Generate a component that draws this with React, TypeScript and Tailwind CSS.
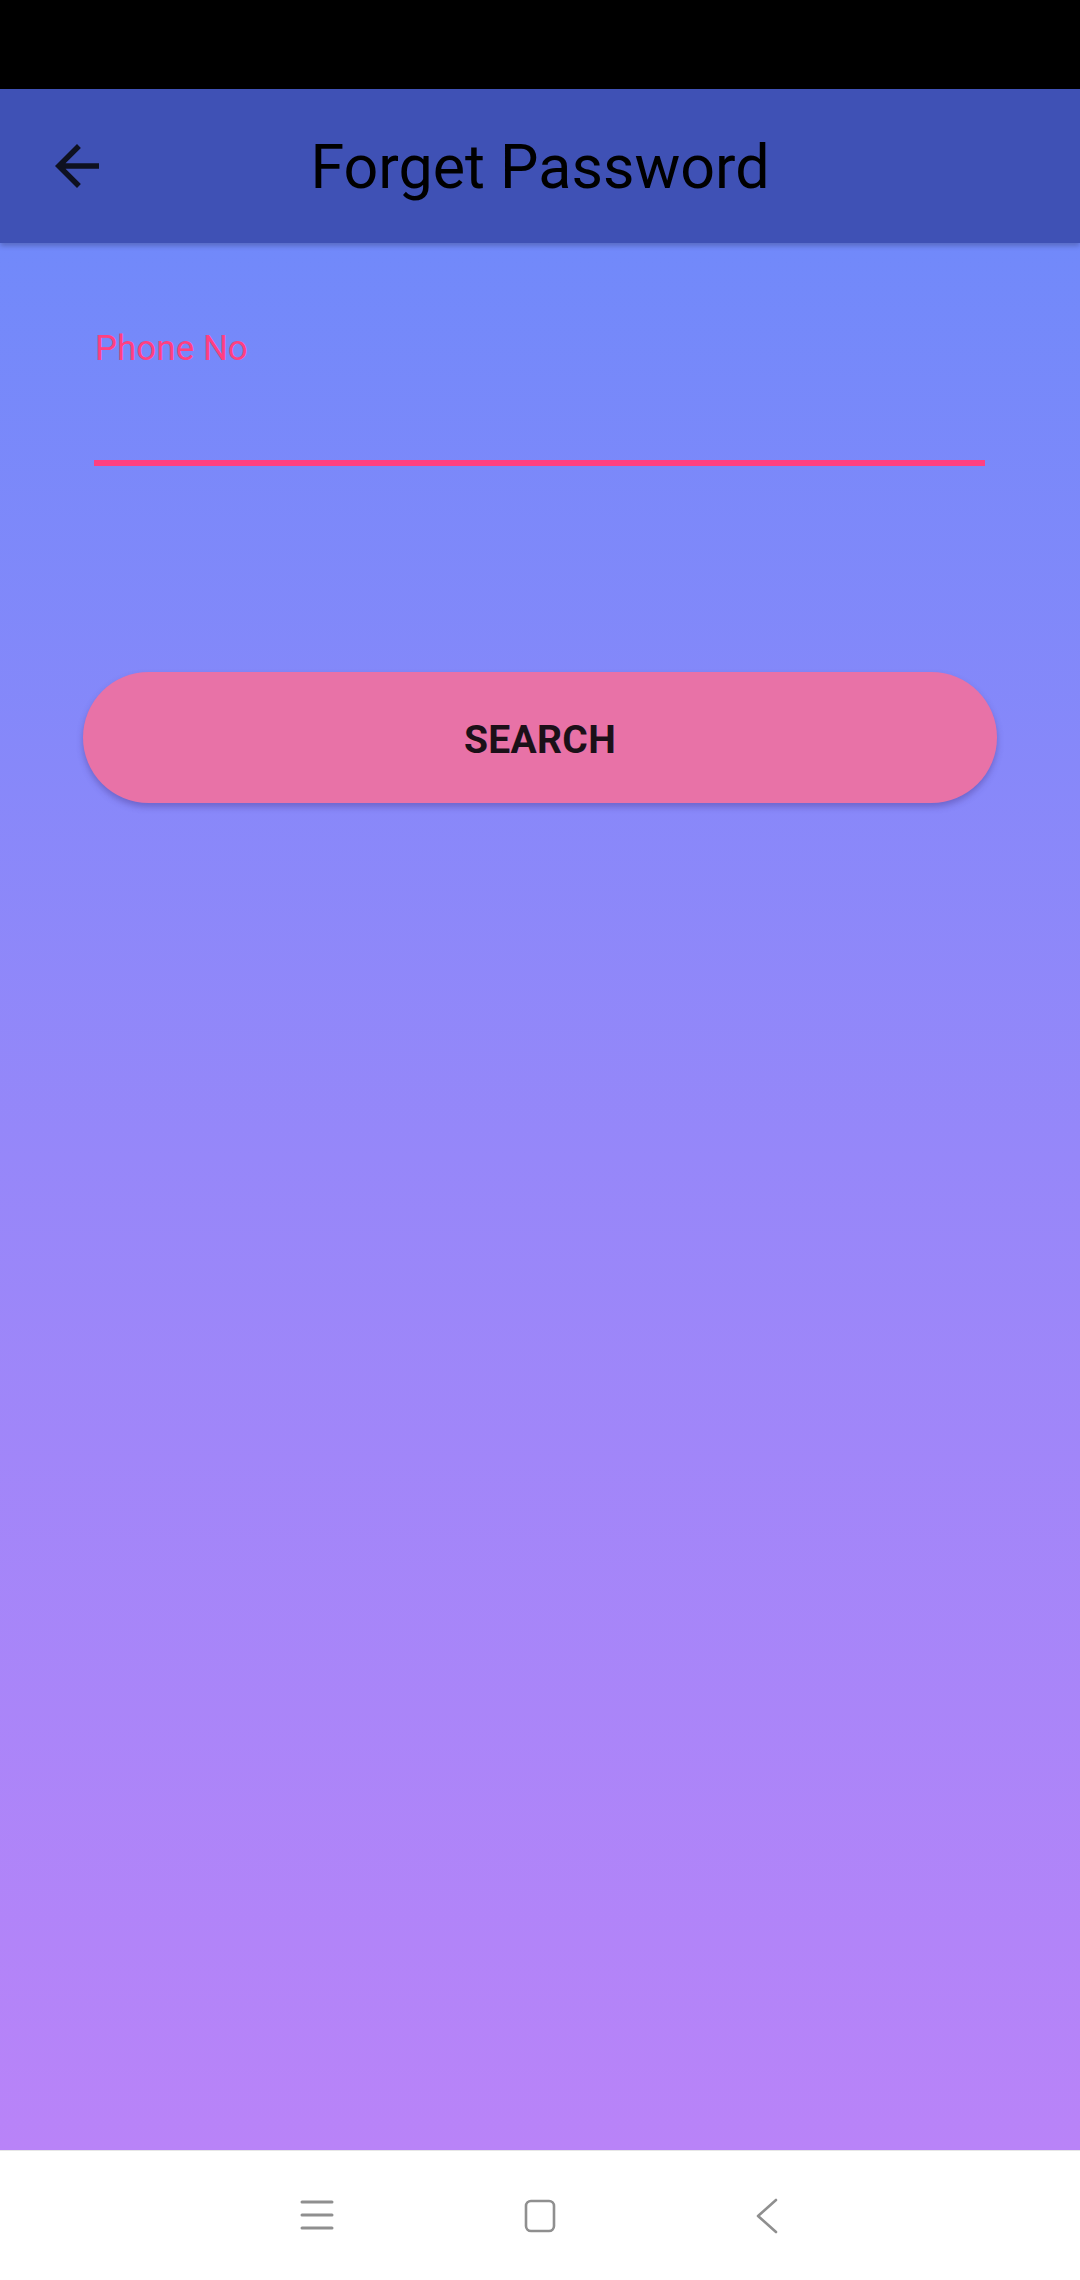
import React from "react";

export default function App() {
  return (
    <div
      className="w-[1080px] h-[2280px] flex flex-col overflow-hidden"
      style={{ fontFamily: "Roboto, 'Noto Sans', sans-serif" }}
    >
      <div className="h-[89px] bg-black shrink-0" />
      <div className="h-[154px] bg-[#3F51B5] shrink-0 relative z-10 flex items-center shadow-[0_3px_5px_rgba(0,0,0,0.22)]">
        <div className="absolute left-[44px] top-[44px] w-[66px] h-[66px]">
          <svg viewBox="0 0 24 24" width="66" height="66">
            <path
              d="M20 11H7.83l5.59-5.59L12 4l-8 8 8 8 1.41-1.41L7.83 13H20v-2z"
              fill="#0e1120"
            />
          </svg>
        </div>
        <div className="flex-1 text-center text-[61px] leading-[72px] text-black pt-[2px]">
          Forget Password
        </div>
      </div>
      <div className="flex-1 flex flex-col bg-gradient-to-b from-[#7189fa] to-[#b983f8]">
        <div className="pt-[85px] px-[94px]">
          <div className="text-[35px] leading-[41px] text-[#ff4081] pl-[1px]">Phone No</div>
          <div className="h-[91px]" />
          <div className="h-[6px] bg-[#ff4081] mr-[1px]" />
        </div>
        <div className="px-[83px] pt-[206px]">
          <div className="h-[131px] rounded-full bg-[#e872a7] flex items-center justify-center shadow-[0_4px_6px_rgba(60,40,120,0.35)]">
            <span className="text-[39px] leading-[46px] font-bold text-[#1b1018] tracking-[0.3px] pt-[5px]">
              SEARCH
            </span>
          </div>
        </div>
      </div>
      <div className="h-[130px] bg-white shrink-0 border-t border-[#e6e6e6] relative">
        <svg
          className="absolute left-[300px] top-[49px]"
          width="34"
          height="30"
          viewBox="0 0 34 30"
        >
          <g stroke="#8f8f8f" strokeWidth="3" strokeLinecap="round">
            <line x1="2" y1="2" x2="32" y2="2" />
            <line x1="2" y1="15" x2="32" y2="15" />
            <line x1="2" y1="28" x2="32" y2="28" />
          </g>
        </svg>
        <svg
          className="absolute left-[523px] top-[47px]"
          width="34"
          height="36"
          viewBox="0 0 34 36"
        >
          <rect
            x="3"
            y="3"
            width="28"
            height="30"
            rx="5"
            fill="none"
            stroke="#8f8f8f"
            strokeWidth="2.6"
          />
        </svg>
        <svg
          className="absolute left-[754px] top-[47px]"
          width="26"
          height="36"
          viewBox="0 0 26 36"
        >
          <polyline
            points="22,2 4,18 22,34"
            fill="none"
            stroke="#8f8f8f"
            strokeWidth="2.6"
            strokeLinecap="round"
            strokeLinejoin="round"
          />
        </svg>
      </div>
    </div>
  );
}
